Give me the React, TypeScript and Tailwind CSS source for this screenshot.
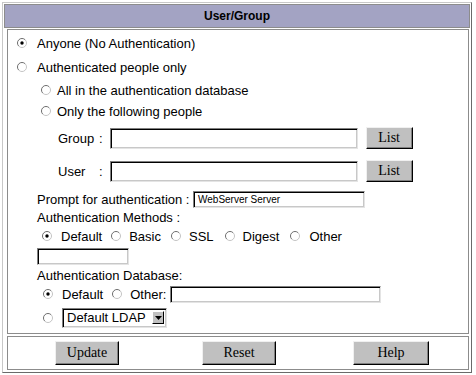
import React from "react"

const sans = "font-['Liberation_Sans',Arial,sans-serif]"
const serif = "font-['Liberation_Serif','Times_New_Roman',serif]"

function Radio({ checked = false }: { checked?: boolean }) {
  return (
    <svg width="10" height="10" viewBox="0 0 10 10" className="shrink-0">
      <circle cx="5" cy="5" r="4.5" fill="#fff" />
      <path d="M1.8 8.2 A4.5 4.5 0 0 1 8.2 1.8" fill="none" stroke="#6e6e6e" strokeWidth="1" />
      <path d="M8.2 1.8 A4.5 4.5 0 0 1 1.8 8.2" fill="none" stroke="#c4c4c4" strokeWidth="1" />
      {checked && <circle cx="5" cy="5" r="1.7" fill="#000" />}
    </svg>
  )
}

const field =
  "border border-t-[#808080] border-l-[#808080] border-r-[#e4e4e4] border-b-[#e4e4e4] bg-white shadow-[inset_1px_1px_0_#000,inset_-1px_-1px_0_#c8c8c8]"

function Btn({ label, w, h = "h-[24px]", extra = "" }: { label: string; w: string; h?: string; extra?: string }) {
  return (
    <button
      className={`${w} ${h} ${extra} ${serif} flex items-center justify-center border border-t-[#f0f0f0] border-l-[#f0f0f0] border-r-black border-b-black bg-[#c0c0c0] text-[14px] text-black shadow-[inset_-1px_-1px_0_#808080]`}
    >
      {label}
    </button>
  )
}

export default function App() {
  return (
    <div className={`h-[375px] w-[476px] bg-white p-[2px] text-[13px] leading-none text-black ${sans}`}>
      <div className="flex h-[371px] w-[470px] flex-col border border-t-[#c8c8c8] border-l-[#c8c8c8] border-r-[#6a6a6a] border-b-[#6a6a6a] p-[1px]">
        {/* header */}
        <div className="flex h-[24px] items-center justify-center border border-[#8c8c8c] bg-[#a3a3c3] text-[12px] font-bold">
          User/Group
        </div>

        {/* settings cell */}
        <div className="mt-[1px] ml-[3px] mr-[1px] h-[305px] border border-[#8c8c8c] pt-[1px]">
          <div className="flex h-[24px] items-center pl-[9px]">
            <Radio checked />
            <span className="ml-[10px]">Anyone (No Authentication)</span>
          </div>
          <div className="flex h-[24px] items-center pl-[9px]">
            <Radio />
            <span className="ml-[10px]">Authenticated people only</span>
          </div>
          <div className="flex h-[22px] items-center pl-[33px]">
            <Radio />
            <span className="ml-[6px]">All in the authentication database</span>
          </div>
          <div className="flex h-[20px] items-center pl-[33px]">
            <Radio />
            <span className="ml-[6px]">Only the following people</span>
          </div>

          <div className="mt-[6px] flex h-[22px] items-center pl-[50px]">
            <span className="w-[41px]">Group</span>
            <span>:</span>
            <div className={`ml-[7px] h-[21px] w-[248px] ${field}`} />
            <Btn label="List" w="w-[47px]" h="h-[22px]" extra="ml-[8px]" />
          </div>
          <div className="mt-[11px] flex h-[22px] items-center pl-[50px]">
            <span className="w-[41px]">User</span>
            <span>:</span>
            <div className={`ml-[7px] h-[21px] w-[248px] ${field}`} />
            <Btn label="List" w="w-[47px]" h="h-[22px]" extra="ml-[8px]" />
          </div>

          <div className="mt-[9px] flex h-[17px] items-center pl-[29px]">
            <span className="w-[156px]">Prompt for authentication :</span>
            <div className={`flex h-[17px] w-[172px] items-center pl-[4px] text-[10px] ${field}`}>WebServer Server</div>
          </div>
          <div className="flex h-[19px] items-center pl-[29px]">Authentication Methods :</div>
          <div className="flex h-[18px] items-center pl-[34px]">
            <Radio checked />
            <span className="ml-[9px]">Default</span>
            <span className="ml-[9px]"><Radio /></span>
            <span className="ml-[8px]">Basic</span>
            <span className="ml-[10px]"><Radio /></span>
            <span className="ml-[8px]">SSL</span>
            <span className="ml-[11px]"><Radio /></span>
            <span className="ml-[8px]">Digest</span>
            <span className="ml-[11px]"><Radio /></span>
            <span className="ml-[9px]">Other</span>
          </div>
          <div className="mt-[3px] pl-[29px]">
            <div className={`h-[17px] w-[92px] ${field}`} />
          </div>

          <div className="flex h-[20px] items-center pl-[29px]">Authentication Database:</div>
          <div className="flex h-[18px] items-center pl-[35px]">
            <Radio checked />
            <span className="ml-[9px]">Default</span>
            <span className="ml-[9px]"><Radio /></span>
            <span className="ml-[8px]">Other:</span>
            <div className={`ml-[4px] h-[17px] w-[211px] ${field}`} />
          </div>
          <div className="mt-[4px] flex h-[21px] items-center pl-[35px]">
            <Radio />
            <div className={`ml-[9px] flex h-[20px] w-[105px] items-center justify-between pl-[4px] pr-[2px] ${field}`}>
              <span>Default LDAP</span>
              <span className="flex h-[13px] w-[12px] items-center justify-center border border-t-white border-l-white border-r-black border-b-black bg-[#c0c0c0]">
                <svg width="7" height="4" viewBox="0 0 7 4">
                  <path d="M0 0H7L3.5 4Z" fill="#000" />
                </svg>
              </span>
            </div>
          </div>
        </div>

        {/* buttons cell */}
        <div className="mt-[2px] ml-[3px] mr-[1px] flex h-[34px] items-center border border-[#8c8c8c]">
          <Btn label="Update" w="w-[64px]" extra="ml-[47px]" />
          <Btn label="Reset" w="w-[74px]" extra="ml-[83px]" />
          <Btn label="Help" w="w-[76px]" extra="ml-[77px]" />
        </div>
      </div>
    </div>
  )
}
